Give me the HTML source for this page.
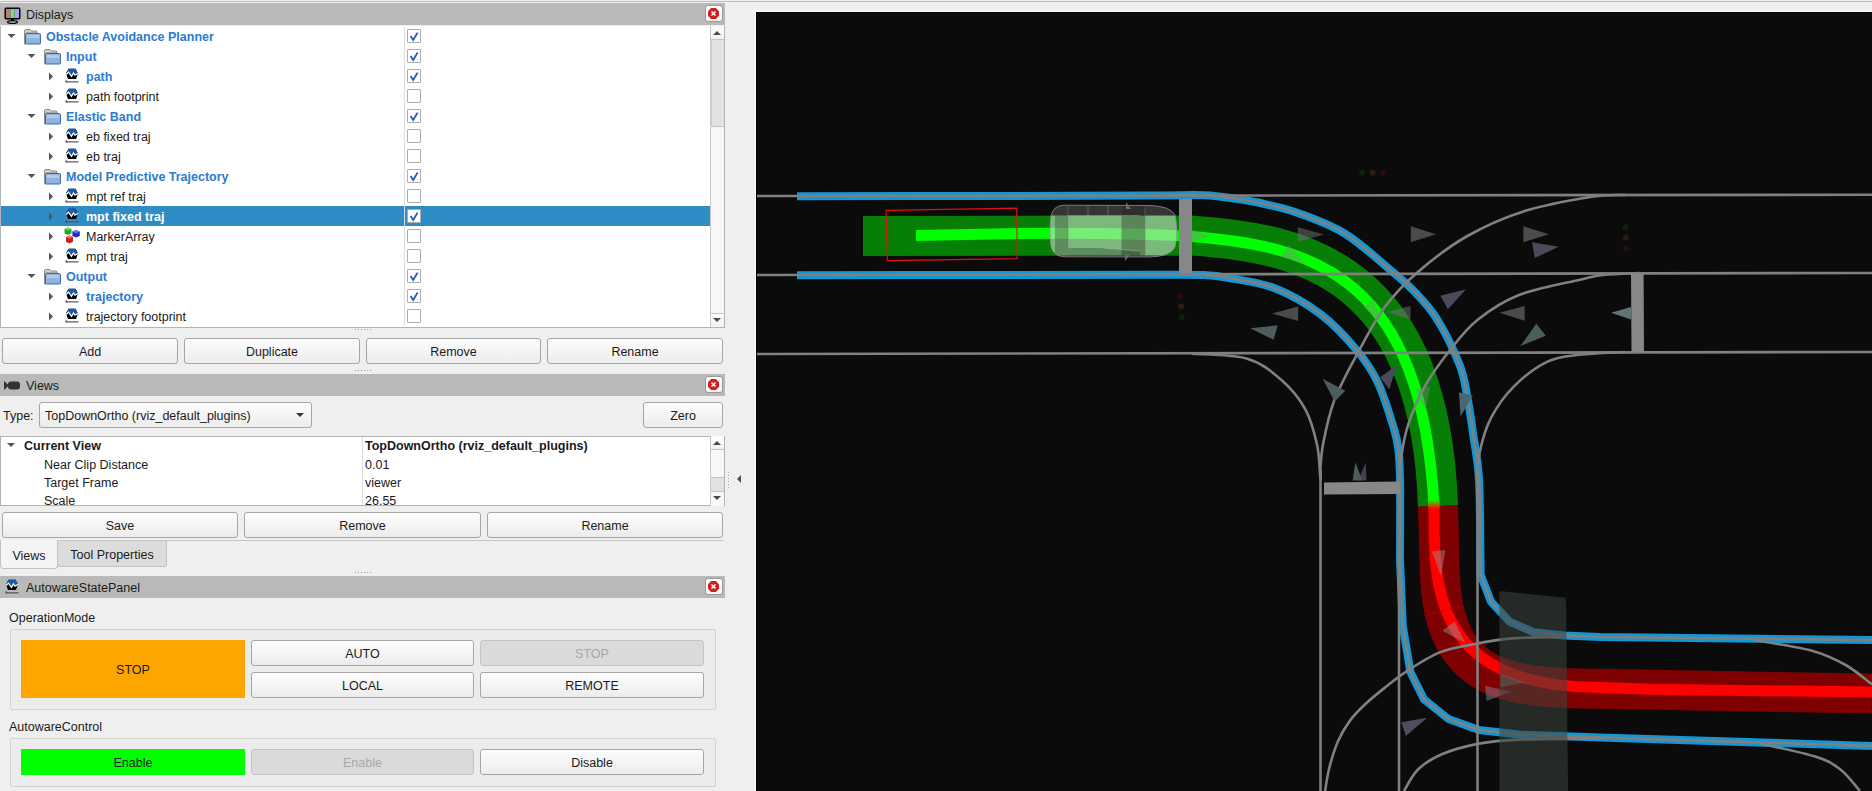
<!DOCTYPE html>
<html><head><meta charset="utf-8">
<style>
*{box-sizing:border-box;margin:0;padding:0}
html,body{width:1872px;height:791px;overflow:hidden;background:#efefef;font-family:"Liberation Sans",sans-serif;font-size:12.5px;color:#1a1a1a}
.a{position:absolute}
.topline{left:0;top:1px;width:1872px;height:1px;background:#bdbdbd}
.hdr{left:0;width:725px;height:22px;background:#b9b9b9}
.hdr .t{position:absolute;left:26px;top:1px;line-height:22px;color:#1a1a1a}
.close{position:absolute;width:18px;height:17px;background:linear-gradient(#fff,#f2f2f2);border:1px solid #9a9a9a;border-radius:3px}
.close svg{position:absolute;left:2px;top:2px}
.tree{background:#fff;border:1px solid #b3b3b3}
.row{position:absolute;left:0;height:20px;line-height:22px;white-space:nowrap}
.blue{color:#2b7bd2;font-weight:bold}
.sel{background:#308cc6}
.btn{position:absolute;height:26px;border:1px solid #a6a6a6;border-radius:3px;background:linear-gradient(#fdfdfd,#ececec);text-align:center;line-height:27px;color:#1a1a1a}
.dis{background:#dadada;border-color:#c4c4c4;color:#a8a8a8}
.cb{position:absolute;width:14px;height:14px;border:1px solid #acacac;background:#fff;border-radius:1px}
.cb svg{position:absolute;left:1px;top:1px}
.dots{position:absolute;height:1px;background-image:linear-gradient(90deg,#9a9a9a 1px,transparent 1px);background-size:3px 1px}
</style></head><body>
<div class="a topline"></div>

<!-- ============ DISPLAYS ============ -->
<div class="a hdr" style="top:3px">
  <svg class="a" style="left:4px;top:4px" width="17" height="17" viewBox="0 0 17 17">
    <rect x="0.5" y="0.5" width="16" height="12" rx="1.5" fill="#000"/>
    <rect x="2" y="2" width="4.3" height="9" fill="#c77777"/>
    <rect x="6.3" y="2" width="4.4" height="9" fill="#86d486"/>
    <rect x="10.7" y="2" width="4.3" height="9" fill="#a6a6ee"/>
    <rect x="7" y="12" width="3" height="2" fill="#000"/>
    <ellipse cx="8.5" cy="15" rx="5" ry="1.4" fill="none" stroke="#000" stroke-width="1.2"/>
  </svg>
  <div class="t">Displays</div>
  <div class="close" style="left:705px;top:2px"><svg width="11" height="11" viewBox="0 0 11 11"><polygon points="3.2,0 7.8,0 11,3.2 11,7.8 7.8,11 3.2,11 0,7.8 0,3.2" fill="#d21e1e"/><path d="M3.5 3.5 L7.5 7.5 M7.5 3.5 L3.5 7.5" stroke="#fff" stroke-width="1.6"/></svg></div>
</div>
<div class="a tree" style="left:0;top:26px;width:725px;height:302px;border-top:none"></div>
<svg class="a" style="left:7px;top:33px" width="9" height="6"><polygon points="0.5,1 8.5,1 4.5,5" fill="#555"/></svg>
<svg class="a" style="left:24px;top:29px" width="17" height="16" viewBox="0 0 17 16"><path d="M0.5 2 Q0.5 0.5 2 0.5 L6 0.5 L7.5 2 L12 2 Q13 2 13 3 L13 4 L2 4 L2 15 L0.5 15 Z" fill="#cfcfcf" stroke="#777" stroke-width="0.8"/><rect x="1.5" y="4.5" width="15" height="10.5" rx="1" fill="#8fb3dd" stroke="#3a6db0" stroke-width="1"/><rect x="3" y="6" width="12" height="3" fill="#b1cbe9"/></svg>
<div class="row blue" style="left:46px;top:26px;">Obstacle Avoidance Planner</div>
<div class="cb" style="left:407px;top:29px"><svg width="12" height="12" viewBox="0 0 12 12"><path d="M1.6 5 L4.2 9 L8.6 1.6" stroke="#1f5fa8" stroke-width="1.8" fill="none"/></svg></div>
<svg class="a" style="left:27px;top:53px" width="9" height="6"><polygon points="0.5,1 8.5,1 4.5,5" fill="#555"/></svg>
<svg class="a" style="left:44px;top:49px" width="17" height="16" viewBox="0 0 17 16"><path d="M0.5 2 Q0.5 0.5 2 0.5 L6 0.5 L7.5 2 L12 2 Q13 2 13 3 L13 4 L2 4 L2 15 L0.5 15 Z" fill="#cfcfcf" stroke="#777" stroke-width="0.8"/><rect x="1.5" y="4.5" width="15" height="10.5" rx="1" fill="#8fb3dd" stroke="#3a6db0" stroke-width="1"/><rect x="3" y="6" width="12" height="3" fill="#b1cbe9"/></svg>
<div class="row blue" style="left:66px;top:46px;">Input</div>
<div class="cb" style="left:407px;top:49px"><svg width="12" height="12" viewBox="0 0 12 12"><path d="M1.6 5 L4.2 9 L8.6 1.6" stroke="#1f5fa8" stroke-width="1.8" fill="none"/></svg></div>
<svg class="a" style="left:48px;top:72px" width="6" height="9"><polygon points="1,0.5 5,4.5 1,8.5" fill="#555"/></svg>
<svg class="a" style="left:64px;top:67px" width="16" height="17" viewBox="0 0 16 17"><polygon points="4.5,1.8 11.5,1.8 14,6.5 12,12.1 4,12.1 2,6.5" fill="#000"/><polygon points="4.5,1.8 11.5,1.8 14,6.5 11,8.3 9.5,6 7.5,9.3 4.5,5.2 2.3,7.2 2,6.5" fill="#1c59a8"/><polyline points="2.2,7.5 4.5,5.2 7.5,9.3 9.5,6 11,8.3 14.2,6.3" stroke="#fff" stroke-width="1.2" fill="none"/><rect x="1.5" y="14" width="13" height="1.6" fill="#555" opacity="0.75"/><rect x="1.8" y="13" width="0.8" height="2.6" fill="#444"/></svg>
<div class="row blue" style="left:86px;top:66px;">path</div>
<div class="cb" style="left:407px;top:69px"><svg width="12" height="12" viewBox="0 0 12 12"><path d="M1.6 5 L4.2 9 L8.6 1.6" stroke="#1f5fa8" stroke-width="1.8" fill="none"/></svg></div>
<svg class="a" style="left:48px;top:92px" width="6" height="9"><polygon points="1,0.5 5,4.5 1,8.5" fill="#555"/></svg>
<svg class="a" style="left:64px;top:87px" width="16" height="17" viewBox="0 0 16 17"><polygon points="4.5,1.8 11.5,1.8 14,6.5 12,12.1 4,12.1 2,6.5" fill="#000"/><polygon points="4.5,1.8 11.5,1.8 14,6.5 11,8.3 9.5,6 7.5,9.3 4.5,5.2 2.3,7.2 2,6.5" fill="#1c59a8"/><polyline points="2.2,7.5 4.5,5.2 7.5,9.3 9.5,6 11,8.3 14.2,6.3" stroke="#fff" stroke-width="1.2" fill="none"/><rect x="1.5" y="14" width="13" height="1.6" fill="#555" opacity="0.75"/><rect x="1.8" y="13" width="0.8" height="2.6" fill="#444"/></svg>
<div class="row" style="left:86px;top:86px;">path footprint</div>
<div class="cb" style="left:407px;top:89px"></div>
<svg class="a" style="left:27px;top:113px" width="9" height="6"><polygon points="0.5,1 8.5,1 4.5,5" fill="#555"/></svg>
<svg class="a" style="left:44px;top:109px" width="17" height="16" viewBox="0 0 17 16"><path d="M0.5 2 Q0.5 0.5 2 0.5 L6 0.5 L7.5 2 L12 2 Q13 2 13 3 L13 4 L2 4 L2 15 L0.5 15 Z" fill="#cfcfcf" stroke="#777" stroke-width="0.8"/><rect x="1.5" y="4.5" width="15" height="10.5" rx="1" fill="#8fb3dd" stroke="#3a6db0" stroke-width="1"/><rect x="3" y="6" width="12" height="3" fill="#b1cbe9"/></svg>
<div class="row blue" style="left:66px;top:106px;">Elastic Band</div>
<div class="cb" style="left:407px;top:109px"><svg width="12" height="12" viewBox="0 0 12 12"><path d="M1.6 5 L4.2 9 L8.6 1.6" stroke="#1f5fa8" stroke-width="1.8" fill="none"/></svg></div>
<svg class="a" style="left:48px;top:132px" width="6" height="9"><polygon points="1,0.5 5,4.5 1,8.5" fill="#555"/></svg>
<svg class="a" style="left:64px;top:127px" width="16" height="17" viewBox="0 0 16 17"><polygon points="4.5,1.8 11.5,1.8 14,6.5 12,12.1 4,12.1 2,6.5" fill="#000"/><polygon points="4.5,1.8 11.5,1.8 14,6.5 11,8.3 9.5,6 7.5,9.3 4.5,5.2 2.3,7.2 2,6.5" fill="#1c59a8"/><polyline points="2.2,7.5 4.5,5.2 7.5,9.3 9.5,6 11,8.3 14.2,6.3" stroke="#fff" stroke-width="1.2" fill="none"/><rect x="1.5" y="14" width="13" height="1.6" fill="#555" opacity="0.75"/><rect x="1.8" y="13" width="0.8" height="2.6" fill="#444"/></svg>
<div class="row" style="left:86px;top:126px;">eb fixed traj</div>
<div class="cb" style="left:407px;top:129px"></div>
<svg class="a" style="left:48px;top:152px" width="6" height="9"><polygon points="1,0.5 5,4.5 1,8.5" fill="#555"/></svg>
<svg class="a" style="left:64px;top:147px" width="16" height="17" viewBox="0 0 16 17"><polygon points="4.5,1.8 11.5,1.8 14,6.5 12,12.1 4,12.1 2,6.5" fill="#000"/><polygon points="4.5,1.8 11.5,1.8 14,6.5 11,8.3 9.5,6 7.5,9.3 4.5,5.2 2.3,7.2 2,6.5" fill="#1c59a8"/><polyline points="2.2,7.5 4.5,5.2 7.5,9.3 9.5,6 11,8.3 14.2,6.3" stroke="#fff" stroke-width="1.2" fill="none"/><rect x="1.5" y="14" width="13" height="1.6" fill="#555" opacity="0.75"/><rect x="1.8" y="13" width="0.8" height="2.6" fill="#444"/></svg>
<div class="row" style="left:86px;top:146px;">eb traj</div>
<div class="cb" style="left:407px;top:149px"></div>
<svg class="a" style="left:27px;top:173px" width="9" height="6"><polygon points="0.5,1 8.5,1 4.5,5" fill="#555"/></svg>
<svg class="a" style="left:44px;top:169px" width="17" height="16" viewBox="0 0 17 16"><path d="M0.5 2 Q0.5 0.5 2 0.5 L6 0.5 L7.5 2 L12 2 Q13 2 13 3 L13 4 L2 4 L2 15 L0.5 15 Z" fill="#cfcfcf" stroke="#777" stroke-width="0.8"/><rect x="1.5" y="4.5" width="15" height="10.5" rx="1" fill="#8fb3dd" stroke="#3a6db0" stroke-width="1"/><rect x="3" y="6" width="12" height="3" fill="#b1cbe9"/></svg>
<div class="row blue" style="left:66px;top:166px;">Model Predictive Trajectory</div>
<div class="cb" style="left:407px;top:169px"><svg width="12" height="12" viewBox="0 0 12 12"><path d="M1.6 5 L4.2 9 L8.6 1.6" stroke="#1f5fa8" stroke-width="1.8" fill="none"/></svg></div>
<svg class="a" style="left:48px;top:192px" width="6" height="9"><polygon points="1,0.5 5,4.5 1,8.5" fill="#555"/></svg>
<svg class="a" style="left:64px;top:187px" width="16" height="17" viewBox="0 0 16 17"><polygon points="4.5,1.8 11.5,1.8 14,6.5 12,12.1 4,12.1 2,6.5" fill="#000"/><polygon points="4.5,1.8 11.5,1.8 14,6.5 11,8.3 9.5,6 7.5,9.3 4.5,5.2 2.3,7.2 2,6.5" fill="#1c59a8"/><polyline points="2.2,7.5 4.5,5.2 7.5,9.3 9.5,6 11,8.3 14.2,6.3" stroke="#fff" stroke-width="1.2" fill="none"/><rect x="1.5" y="14" width="13" height="1.6" fill="#555" opacity="0.75"/><rect x="1.8" y="13" width="0.8" height="2.6" fill="#444"/></svg>
<div class="row" style="left:86px;top:186px;">mpt ref traj</div>
<div class="cb" style="left:407px;top:189px"></div>
<div class="a sel" style="left:1px;top:206px;width:709px;height:20px"></div>
<svg class="a" style="left:48px;top:212px" width="6" height="9"><polygon points="1,0.5 5,4.5 1,8.5" fill="#555"/></svg>
<svg class="a" style="left:64px;top:207px" width="16" height="17" viewBox="0 0 16 17"><polygon points="4.5,1.8 11.5,1.8 14,6.5 12,12.1 4,12.1 2,6.5" fill="#000"/><polygon points="4.5,1.8 11.5,1.8 14,6.5 11,8.3 9.5,6 7.5,9.3 4.5,5.2 2.3,7.2 2,6.5" fill="#1c59a8"/><polyline points="2.2,7.5 4.5,5.2 7.5,9.3 9.5,6 11,8.3 14.2,6.3" stroke="#fff" stroke-width="1.2" fill="none"/><rect x="1.5" y="14" width="13" height="1.6" fill="#555" opacity="0.75"/><rect x="1.8" y="13" width="0.8" height="2.6" fill="#444"/></svg>
<div class="row" style="left:86px;top:206px;color:#fff;font-weight:bold;">mpt fixed traj</div>
<div class="cb" style="left:407px;top:209px"><svg width="12" height="12" viewBox="0 0 12 12"><path d="M1.6 5 L4.2 9 L8.6 1.6" stroke="#1f5fa8" stroke-width="1.8" fill="none"/></svg></div>
<svg class="a" style="left:48px;top:232px" width="6" height="9"><polygon points="1,0.5 5,4.5 1,8.5" fill="#555"/></svg>
<svg class="a" style="left:63px;top:227px" width="18" height="18" viewBox="0 0 18 18"><polygon points="5,0.5 8.5,2 8.5,6.5 5,8 1.5,6.5 1.5,2" fill="#22a822"/><polygon points="5,0.5 8.5,2 5,3.5 1.5,2" fill="#70dd70"/><polygon points="13,3 16.8,4.6 16.8,9 13,10.6 9.4,9 9.4,4.6" fill="#1f2fc4"/><polygon points="13,3 16.8,4.6 13,6.2 9.4,4.6" fill="#6b7cf2"/><polygon points="6.5,8.5 10,10 10,14.8 6.5,16.5 3,14.8 3,10" fill="#cc2020"/><polygon points="6.5,8.5 10,10 6.5,11.6 3,10" fill="#f07272"/></svg>
<div class="row" style="left:86px;top:226px;">MarkerArray</div>
<div class="cb" style="left:407px;top:229px"></div>
<svg class="a" style="left:48px;top:252px" width="6" height="9"><polygon points="1,0.5 5,4.5 1,8.5" fill="#555"/></svg>
<svg class="a" style="left:64px;top:247px" width="16" height="17" viewBox="0 0 16 17"><polygon points="4.5,1.8 11.5,1.8 14,6.5 12,12.1 4,12.1 2,6.5" fill="#000"/><polygon points="4.5,1.8 11.5,1.8 14,6.5 11,8.3 9.5,6 7.5,9.3 4.5,5.2 2.3,7.2 2,6.5" fill="#1c59a8"/><polyline points="2.2,7.5 4.5,5.2 7.5,9.3 9.5,6 11,8.3 14.2,6.3" stroke="#fff" stroke-width="1.2" fill="none"/><rect x="1.5" y="14" width="13" height="1.6" fill="#555" opacity="0.75"/><rect x="1.8" y="13" width="0.8" height="2.6" fill="#444"/></svg>
<div class="row" style="left:86px;top:246px;">mpt traj</div>
<div class="cb" style="left:407px;top:249px"></div>
<svg class="a" style="left:27px;top:273px" width="9" height="6"><polygon points="0.5,1 8.5,1 4.5,5" fill="#555"/></svg>
<svg class="a" style="left:44px;top:269px" width="17" height="16" viewBox="0 0 17 16"><path d="M0.5 2 Q0.5 0.5 2 0.5 L6 0.5 L7.5 2 L12 2 Q13 2 13 3 L13 4 L2 4 L2 15 L0.5 15 Z" fill="#cfcfcf" stroke="#777" stroke-width="0.8"/><rect x="1.5" y="4.5" width="15" height="10.5" rx="1" fill="#8fb3dd" stroke="#3a6db0" stroke-width="1"/><rect x="3" y="6" width="12" height="3" fill="#b1cbe9"/></svg>
<div class="row blue" style="left:66px;top:266px;">Output</div>
<div class="cb" style="left:407px;top:269px"><svg width="12" height="12" viewBox="0 0 12 12"><path d="M1.6 5 L4.2 9 L8.6 1.6" stroke="#1f5fa8" stroke-width="1.8" fill="none"/></svg></div>
<svg class="a" style="left:48px;top:292px" width="6" height="9"><polygon points="1,0.5 5,4.5 1,8.5" fill="#555"/></svg>
<svg class="a" style="left:64px;top:287px" width="16" height="17" viewBox="0 0 16 17"><polygon points="4.5,1.8 11.5,1.8 14,6.5 12,12.1 4,12.1 2,6.5" fill="#000"/><polygon points="4.5,1.8 11.5,1.8 14,6.5 11,8.3 9.5,6 7.5,9.3 4.5,5.2 2.3,7.2 2,6.5" fill="#1c59a8"/><polyline points="2.2,7.5 4.5,5.2 7.5,9.3 9.5,6 11,8.3 14.2,6.3" stroke="#fff" stroke-width="1.2" fill="none"/><rect x="1.5" y="14" width="13" height="1.6" fill="#555" opacity="0.75"/><rect x="1.8" y="13" width="0.8" height="2.6" fill="#444"/></svg>
<div class="row blue" style="left:86px;top:286px;">trajectory</div>
<div class="cb" style="left:407px;top:289px"><svg width="12" height="12" viewBox="0 0 12 12"><path d="M1.6 5 L4.2 9 L8.6 1.6" stroke="#1f5fa8" stroke-width="1.8" fill="none"/></svg></div>
<svg class="a" style="left:48px;top:312px" width="6" height="9"><polygon points="1,0.5 5,4.5 1,8.5" fill="#555"/></svg>
<svg class="a" style="left:64px;top:307px" width="16" height="17" viewBox="0 0 16 17"><polygon points="4.5,1.8 11.5,1.8 14,6.5 12,12.1 4,12.1 2,6.5" fill="#000"/><polygon points="4.5,1.8 11.5,1.8 14,6.5 11,8.3 9.5,6 7.5,9.3 4.5,5.2 2.3,7.2 2,6.5" fill="#1c59a8"/><polyline points="2.2,7.5 4.5,5.2 7.5,9.3 9.5,6 11,8.3 14.2,6.3" stroke="#fff" stroke-width="1.2" fill="none"/><rect x="1.5" y="14" width="13" height="1.6" fill="#555" opacity="0.75"/><rect x="1.8" y="13" width="0.8" height="2.6" fill="#444"/></svg>
<div class="row" style="left:86px;top:306px;">trajectory footprint</div>
<div class="cb" style="left:407px;top:309px"></div>
<div class="a" style="left:404px;top:27px;width:1px;height:299px;background:#dcdcdc"></div>
<!-- scrollbar -->
<div class="a" style="left:710px;top:26px;width:14px;height:301px;background:#f7f7f7;border-left:1px solid #c9c9c9"></div>
<div class="a" style="left:711px;top:27px;width:13px;height:13px;background:linear-gradient(#fff,#f0f0f0);border-bottom:1px solid #c4c4c4"></div>
<svg class="a" style="left:712px;top:29px" width="10" height="8"><polygon points="1,6 5,2 9,6" fill="#4a4a4a"/></svg>
<div class="a" style="left:711px;top:40px;width:13px;height:87px;background:#e2e2e2;border-bottom:1px solid #c4c4c4;border-left:1px solid #cfcfcf"></div>
<div class="a" style="left:711px;top:313px;width:13px;height:13px;background:linear-gradient(#fff,#f0f0f0);border-top:1px solid #c4c4c4"></div>
<svg class="a" style="left:712px;top:316px" width="10" height="8"><polygon points="1,2 5,6 9,2" fill="#4a4a4a"/></svg>
<div class="dots" style="left:355px;top:329px;width:18px"></div>

<div class="btn" style="left:2px;top:338px;width:176px">Add</div>
<div class="btn" style="left:184px;top:338px;width:176px">Duplicate</div>
<div class="btn" style="left:366px;top:338px;width:175px">Remove</div>
<div class="btn" style="left:547px;top:338px;width:176px">Rename</div>
<div class="dots" style="left:355px;top:370px;width:18px"></div>

<!-- ============ VIEWS ============ -->
<div class="a hdr" style="top:374px">
  <svg class="a" style="left:4px;top:7px" width="17" height="9" viewBox="0 0 17 9">
    <polygon points="0,0 5,4.5 0,9" fill="#333"/>
    <rect x="4" y="0.5" width="12" height="8" rx="3" fill="#333"/>
  </svg>
  <div class="t">Views</div>
  <div class="close" style="left:705px;top:2px"><svg width="11" height="11" viewBox="0 0 11 11"><polygon points="3.2,0 7.8,0 11,3.2 11,7.8 7.8,11 3.2,11 0,7.8 0,3.2" fill="#d21e1e"/><path d="M3.5 3.5 L7.5 7.5 M7.5 3.5 L3.5 7.5" stroke="#fff" stroke-width="1.6"/></svg></div>
</div>
<div class="a" style="left:3px;top:406px;line-height:20px">Type:</div>
<div class="btn" style="left:39px;top:402px;width:273px;text-align:left;padding-left:5px;line-height:26px;border-radius:3px">TopDownOrtho (rviz_default_plugins)
  <svg class="a" style="left:255px;top:9px" width="10" height="6"><polygon points="1,1 9,1 5,5" fill="#333"/></svg></div>
<div class="btn" style="left:643px;top:402px;width:80px">Zero</div>

<div class="a tree" style="left:0;top:436px;width:725px;height:70px"></div>
<div class="a" style="left:362px;top:437px;width:1px;height:68px;background:#dcdcdc"></div>
<svg class="a" style="left:6px;top:442px" width="10" height="8"><polygon points="1,1 9,1 5,5" fill="#555"/></svg>
<div class="row" style="left:24px;top:436px;height:18px;line-height:21px;font-weight:bold">Current View</div>
<div class="row" style="left:44px;top:455px;height:18px;line-height:21px">Near Clip Distance</div>
<div class="row" style="left:44px;top:473px;height:18px;line-height:21px">Target Frame</div>
<div class="row" style="left:44px;top:491px;height:18px;line-height:21px">Scale</div>
<div class="row" style="left:365px;top:436px;height:18px;line-height:21px;font-weight:bold">TopDownOrtho (rviz_default_plugins)</div>
<div class="row" style="left:365px;top:455px;height:18px;line-height:21px">0.01</div>
<div class="row" style="left:365px;top:473px;height:18px;line-height:21px">viewer</div>
<div class="row" style="left:365px;top:491px;height:18px;line-height:21px">26.55</div>
<!-- views scrollbar -->
<div class="a" style="left:710px;top:436px;width:14px;height:70px;background:#f7f7f7;border-left:1px solid #c9c9c9"></div>
<div class="a" style="left:711px;top:437px;width:13px;height:13px;background:linear-gradient(#fff,#f0f0f0);border-bottom:1px solid #c4c4c4"></div>
<svg class="a" style="left:712px;top:439px" width="10" height="8"><polygon points="1,6 5,2 9,6" fill="#4a4a4a"/></svg>
<div class="a" style="left:711px;top:477px;width:13px;height:15px;background:#e2e2e2;border-top:1px solid #c4c4c4;border-bottom:1px solid #c4c4c4"></div>
<svg class="a" style="left:712px;top:494px" width="10" height="8"><polygon points="1,2 5,6 9,2" fill="#4a4a4a"/></svg>

<div class="btn" style="left:2px;top:512px;width:236px">Save</div>
<div class="btn" style="left:244px;top:512px;width:237px">Remove</div>
<div class="btn" style="left:487px;top:512px;width:236px">Rename</div>

<!-- tabs -->
<div class="a" style="left:57px;top:540px;width:667px;height:1px;background:#c6c6c6"></div>
<div class="a" style="left:57px;top:541px;width:110px;height:26px;background:#dcdcdc;border:1px solid #c2c2c2;border-top:none;border-radius:0 0 3px 3px;text-align:center;line-height:28px">Tool Properties</div>
<div class="a" style="left:0;top:540px;width:58px;height:29px;background:#f4f4f4;border:1px solid #c2c2c2;border-top:none;border-radius:0 0 4px 4px;text-align:center;line-height:32px">Views</div>
<div class="dots" style="left:355px;top:572px;width:18px"></div>

<!-- ============ AUTOWARE STATE PANEL ============ -->
<div class="a hdr" style="top:576px">
  <svg class="a" style="left:4px;top:2px" width="16" height="17" viewBox="0 0 16 17"><polygon points="4.5,1.8 11.5,1.8 14,6.5 12,12.1 4,12.1 2,6.5" fill="#000"/><polygon points="4.5,1.8 11.5,1.8 14,6.5 11,8.3 9.5,6 7.5,9.3 4.5,5.2 2.3,7.2 2,6.5" fill="#1c59a8"/><polyline points="2.2,7.5 4.5,5.2 7.5,9.3 9.5,6 11,8.3 14.2,6.3" stroke="#fff" stroke-width="1.2" fill="none"/><rect x="1.5" y="14" width="13" height="1.6" fill="#555" opacity="0.75"/><rect x="1.8" y="13" width="0.8" height="2.6" fill="#444"/></svg>
  <div class="t">AutowareStatePanel</div>
  <div class="close" style="left:705px;top:2px"><svg width="11" height="11" viewBox="0 0 11 11"><polygon points="3.2,0 7.8,0 11,3.2 11,7.8 7.8,11 3.2,11 0,7.8 0,3.2" fill="#d21e1e"/><path d="M3.5 3.5 L7.5 7.5 M7.5 3.5 L3.5 7.5" stroke="#fff" stroke-width="1.6"/></svg></div>
</div>
<div class="a" style="left:9px;top:608px;line-height:20px">OperationMode</div>
<div class="a" style="left:10px;top:629px;width:706px;height:81px;border:1px solid #d2d2d2;border-radius:2px;background:#ececec"></div>
<div class="a" style="left:21px;top:640px;width:224px;height:58px;background:#ffa500;text-align:center;line-height:60px">STOP</div>
<div class="btn" style="left:251px;top:640px;width:223px;height:26px">AUTO</div>
<div class="btn dis" style="left:480px;top:640px;width:224px;height:26px">STOP</div>
<div class="btn" style="left:251px;top:672px;width:223px;height:26px">LOCAL</div>
<div class="btn" style="left:480px;top:672px;width:224px;height:26px">REMOTE</div>

<div class="a" style="left:9px;top:717px;line-height:20px">AutowareControl</div>
<div class="a" style="left:10px;top:738px;width:706px;height:49px;border:1px solid #d2d2d2;border-radius:2px;background:#ececec"></div>
<div class="a" style="left:21px;top:749px;width:224px;height:26px;background:#00ff00;text-align:center;line-height:28px">Enable</div>
<div class="btn dis" style="left:251px;top:749px;width:223px;height:26px">Enable</div>
<div class="btn" style="left:480px;top:749px;width:224px;height:26px">Disable</div>

<!-- splitter -->
<div class="a" style="left:728px;top:472px;width:1px;height:17px;background-image:linear-gradient(#a8a8a8 1px,transparent 1px);background-size:1px 3px"></div>
<svg class="a" style="left:735px;top:474px" width="8" height="10"><polygon points="2,5 6,1 6,9" fill="#4f4f4f"/></svg>

<!-- ============ 3D VIEW ============ -->
<div class="a" style="left:755px;top:11px;width:1117px;height:780px;background:#fff"></div>
<div class="a" style="left:756px;top:12px;width:1116px;height:779px;background:#000"></div>
<svg id="v3d" class="a" style="left:757px;top:13px" width="1115" height="778" viewBox="757 13 1115 778">
<rect x="757" y="13" width="1115" height="778" fill="#0b0b0b"/>
<path d="M863,236 L1192,235.6 C1301.4,242.8 1430.3,270.1 1438,506" stroke="#077f07" stroke-width="40" fill="none"/>
<path d="M1438,506 L1439.5,560 C1439.5,678 1497,688.7 1600,688.7 L1872,693.6" stroke="#7f0000" stroke-width="40" fill="none"/>

<path d="M916,235.4 L1020,233.5 Q1120,232.5 1192,236.4 C1315.6,246.3 1421.8,277.2 1434,506" stroke="#00ff00" stroke-width="11" fill="none"/>
<path d="M1434,506 C1434,582 1430,687.5 1600,687.5 L1650,689.3 L1872,692" stroke="#ff0000" stroke-width="11" fill="none"/>
<defs><linearGradient id="g2r" x1="0" y1="0" x2="0" y2="1"><stop offset="0" stop-color="#00ff00"/><stop offset="0.5" stop-color="#a07000"/><stop offset="1" stop-color="#ff0000"/></linearGradient></defs>
<rect x="1428.5" y="500" width="11" height="9" fill="url(#g2r)"/>
<path d="M1424,615.5 L1462,606.4" stroke="#c00000" stroke-width="1" opacity="0.7"/>
<path d="M797.0,196.2 C830.8,196.2 941.2,196.1 1000.0,196.0 C1058.8,195.9 1116.0,195.6 1150.0,195.5 C1184.0,195.4 1189.7,194.6 1204.0,195.2 C1218.3,195.8 1225.7,197.3 1236.0,198.8 C1246.3,200.3 1255.3,201.8 1266.0,204.3 C1276.7,206.8 1286.8,208.8 1300.0,213.7 C1313.2,218.6 1330.3,224.5 1345.5,234.0 C1360.7,243.5 1379.6,261.0 1391.0,270.5 C1402.4,280.0 1406.2,283.0 1413.8,291.0 C1421.4,299.0 1428.9,306.2 1436.5,318.3 C1444.1,330.4 1454.2,351.1 1459.3,363.9 C1464.4,376.7 1464.6,382.8 1467.0,395.0 C1469.4,407.2 1471.6,423.4 1473.6,437.4 C1475.6,451.4 1477.8,458.6 1479.0,479.0 C1480.2,499.4 1480.2,546.5 1480.5,560.0 L1480.5,574.4 L1491.0,601.8 L1509.5,621.6 L1534.0,632.3 L1564.0,635.4 L1600.0,637.0 L1872.0,640.0" stroke="#1196d6" stroke-width="8" fill="none" stroke-linejoin="round"/>
<path d="M797.0,275.2 C830.8,275.2 941.2,275.1 1000.0,275.0 C1058.8,274.9 1116.0,274.8 1150.0,274.8 C1184.0,274.8 1190.7,274.4 1204.0,275.0 C1217.3,275.6 1218.1,275.9 1230.0,278.2 C1241.9,280.4 1260.3,282.4 1275.5,288.5 C1290.7,294.6 1307.3,304.1 1321.0,314.5 C1334.7,324.9 1347.9,339.6 1357.4,351.0 C1366.9,362.4 1371.9,370.1 1378.0,383.0 C1384.1,395.9 1390.5,417.3 1393.9,428.5 C1397.3,439.7 1397.4,441.6 1398.4,450.0 C1399.4,458.4 1399.7,460.7 1400.0,479.0 C1400.3,497.3 1400.0,546.5 1400.0,560.0 L1402.8,626.0 L1410.4,672.0 L1424.0,699.4 L1448.5,719.0 L1479.0,730.0 L1518.7,734.5 L1600.0,737.5 L1872.0,746.0" stroke="#1196d6" stroke-width="8" fill="none" stroke-linejoin="round"/>
<path d="M756.0,196.0 L1872.0,194.8" stroke="#808080" stroke-width="2.6" fill="none" stroke-linejoin="round"/>
<path d="M756.0,275.0 L1872.0,273.0" stroke="#808080" stroke-width="2.6" fill="none" stroke-linejoin="round"/>
<path d="M756.0,354.0 L1872.0,352.0" stroke="#808080" stroke-width="2.6" fill="none" stroke-linejoin="round"/>
<path d="M1150.0,195.5 C1159.0,195.4 1189.7,194.6 1204.0,195.2 C1218.3,195.8 1225.7,197.3 1236.0,198.8 C1246.3,200.3 1255.3,201.8 1266.0,204.3 C1276.7,206.8 1286.8,208.8 1300.0,213.7 C1313.2,218.6 1330.3,224.5 1345.5,234.0 C1360.7,243.5 1379.6,261.0 1391.0,270.5 C1402.4,280.0 1406.2,283.0 1413.8,291.0 C1421.4,299.0 1428.9,306.2 1436.5,318.3 C1444.1,330.4 1454.2,351.1 1459.3,363.9 C1464.4,376.7 1464.6,382.8 1467.0,395.0 C1469.4,407.2 1471.6,423.4 1473.6,437.4 C1475.6,451.4 1477.8,458.6 1479.0,479.0 C1480.2,499.4 1480.2,546.5 1480.5,560.0 L1480.5,574.4 L1491.0,601.8 L1509.5,621.6 L1534.0,632.3 L1564.0,635.4 L1600.0,637.0 L1872.0,640.0" stroke="#808080" stroke-width="2.6" fill="none" stroke-linejoin="round"/>
<path d="M1754.0,640.0 C1763.7,641.8 1796.7,646.5 1812.0,650.7 C1827.3,654.9 1835.7,659.4 1845.7,665.0 C1855.7,670.6 1867.6,681.2 1872.0,684.5" stroke="#808080" stroke-width="2.6" fill="none" stroke-linejoin="round"/>
<path d="M1150.0,274.8 C1159.0,274.8 1190.7,274.4 1204.0,275.0 C1217.3,275.6 1218.1,275.9 1230.0,278.2 C1241.9,280.4 1260.3,282.4 1275.5,288.5 C1290.7,294.6 1307.3,304.1 1321.0,314.5 C1334.7,324.9 1347.9,339.6 1357.4,351.0 C1366.9,362.4 1371.9,370.1 1378.0,383.0 C1384.1,395.9 1390.5,417.3 1393.9,428.5 C1397.3,439.7 1397.4,441.6 1398.4,450.0 C1399.4,458.4 1399.7,460.7 1400.0,479.0 C1400.3,497.3 1400.0,546.5 1400.0,560.0 L1402.8,626.0 L1410.4,672.0 L1424.0,699.4 L1448.5,719.0 L1479.0,730.0 L1518.7,734.5 L1600.0,737.5 L1872.0,746.0" stroke="#808080" stroke-width="2.6" fill="none" stroke-linejoin="round"/>
<path d="M1761.0,743.7 C1770.3,745.9 1803.4,752.6 1816.7,757.0 C1830.0,761.4 1833.8,764.3 1841.0,770.0 C1848.2,775.7 1856.8,787.5 1860.0,791.0" stroke="#808080" stroke-width="2.6" fill="none" stroke-linejoin="round"/>
<path d="M1320.5,470.0 L1320.5,791.0" stroke="#808080" stroke-width="2.6" fill="none" stroke-linejoin="round"/>
<path d="M1399.0,470.0 L1399.0,791.0" stroke="#808080" stroke-width="2.6" fill="none" stroke-linejoin="round"/>
<path d="M1477.5,470.0 L1477.5,791.0" stroke="#808080" stroke-width="2.6" fill="none" stroke-linejoin="round"/>
<path d="M1192.0,353.8 C1201.2,354.6 1232.3,354.2 1247.3,358.7 C1262.3,363.1 1272.3,372.0 1282.0,380.5 C1291.7,389.0 1299.7,398.9 1305.5,409.6 C1311.3,420.3 1314.6,433.8 1317.0,444.5 C1319.4,455.2 1319.4,467.7 1320.0,473.6 C1320.6,479.5 1320.4,478.9 1320.5,480.0" stroke="#808080" stroke-width="2.6" fill="none" stroke-linejoin="round"/>
<path d="M1625.0,195.0 C1619.5,195.3 1608.6,194.0 1591.7,196.7 C1574.8,199.4 1544.3,204.8 1523.4,211.4 C1502.5,218.0 1484.2,226.3 1466.5,236.5 C1448.8,246.7 1430.9,260.7 1417.3,272.4 C1403.7,284.1 1394.8,293.6 1385.0,306.7 C1375.2,319.8 1367.1,335.6 1358.7,351.2 C1350.3,366.8 1340.4,384.4 1334.4,400.0 C1328.5,415.6 1325.3,432.5 1323.0,444.5 C1320.7,456.5 1320.7,466.1 1320.3,472.0 C1319.9,477.9 1320.5,478.7 1320.5,480.0" stroke="#808080" stroke-width="2.6" fill="none" stroke-linejoin="round"/>
<path d="M1640.0,273.0 C1633.8,273.3 1613.0,273.9 1603.0,275.0 C1593.0,276.1 1594.0,276.4 1580.0,279.7 C1566.0,283.0 1536.1,288.3 1519.0,295.0 C1501.9,301.7 1489.0,310.7 1477.4,320.0 C1465.8,329.3 1458.3,339.6 1449.5,350.7 C1440.7,361.8 1431.5,374.3 1424.5,386.8 C1417.5,399.3 1411.7,413.8 1407.8,425.8 C1403.9,437.8 1402.3,450.0 1400.9,459.0 C1399.5,468.0 1399.7,476.5 1399.5,480.0" stroke="#808080" stroke-width="2.6" fill="none" stroke-linejoin="round"/>
<path d="M1625.0,352.0 C1617.5,352.5 1593.0,353.2 1580.0,354.8 C1567.0,356.4 1558.1,356.5 1547.0,361.8 C1535.9,367.1 1522.8,377.5 1513.5,386.8 C1504.2,396.1 1496.9,406.7 1491.3,417.4 C1485.7,428.1 1482.3,440.4 1480.0,450.8 C1477.7,461.2 1477.9,475.1 1477.5,480.0" stroke="#808080" stroke-width="2.6" fill="none" stroke-linejoin="round"/>
<path d="M1325.1,791.0 C1325.8,787.0 1327.3,775.3 1329.5,767.0 C1331.7,758.7 1334.7,748.7 1338.1,741.0 C1341.5,733.3 1345.3,726.9 1350.0,720.6 C1354.7,714.3 1360.2,708.9 1366.2,703.3 C1372.2,697.7 1378.9,692.4 1385.7,687.0 C1392.5,681.6 1398.3,676.6 1407.3,670.8 C1416.3,665.0 1429.2,656.7 1439.7,652.4 C1450.2,648.1 1457.8,647.2 1470.0,644.9 C1482.2,642.6 1496.9,639.7 1512.6,638.4 C1528.3,637.1 1555.4,637.2 1564.0,637.0" stroke="#808080" stroke-width="2.6" fill="none" stroke-linejoin="round"/>
<path d="M1404.0,791.0 C1406.3,787.4 1411.6,775.7 1418.0,769.5 C1424.4,763.3 1432.2,758.3 1442.4,754.0 C1452.6,749.7 1466.3,746.0 1479.0,743.6 C1491.7,741.2 1498.5,740.5 1518.7,739.6 C1538.9,738.8 1586.5,738.7 1600.0,738.5" stroke="#808080" stroke-width="2.6" fill="none" stroke-linejoin="round"/>
<rect x="1179" y="199" width="13" height="74" fill="#878787"/>
<polygon points="1631,273 1643.6,273 1644,352 1631.5,352" fill="#878787"/>
<polygon points="1324,482.5 1400,481.5 1400,494 1324,494.5" fill="#878787"/>
<defs><clipPath id="carclip"><path d="M1064,205.2 L1150,205.5 Q1170,206 1175,215 Q1178.5,231 1175,247 Q1170,256.5 1150,257 L1064,256.8 Q1053,256 1051,246 Q1049,231 1051,216 Q1053,205.5 1064,205.2 Z"/></clipPath></defs>
<g clip-path="url(#carclip)">
<rect x="1048" y="203" width="132" height="13" fill="rgba(58,58,58,0.92)"/>
<rect x="1048" y="255.5" width="132" height="4" fill="rgba(58,58,58,0.92)"/>
<rect x="1048" y="215.5" width="132" height="40" fill="rgba(201,222,201,0.6)"/>
<rect x="1121.5" y="215.5" width="23.5" height="40" fill="rgba(20,30,20,0.33)"/>
<rect x="1055" y="215.5" width="13" height="40" fill="rgba(20,30,20,0.28)"/>
<rect x="1121.5" y="203" width="24" height="13" fill="rgba(30,30,30,0.3)"/>
<path d="M1068,215.5 L1140,215.5 M1088,206 L1088,215 M1108,206 L1108,215" stroke="rgba(150,150,150,0.5)" stroke-width="1" fill="none"/>
<path d="M1068,248 L1103,248 L1140,251 L1140,257 L1068,257 Z" fill="rgba(30,40,30,0.3)"/>
<path d="M1103,248 L1140,251" stroke="rgba(200,200,200,0.4)" stroke-width="1" fill="none"/>
</g>
<path d="M1064,205.2 L1150,205.5 Q1170,206 1175,215 Q1178.5,231 1175,247 Q1170,256.5 1150,257 L1064,256.8 Q1053,256 1051,246 Q1049,231 1051,216 Q1053,205.5 1064,205.2 Z" fill="none" stroke="rgba(150,150,150,0.75)" stroke-width="1"/>
<path d="M1068,206 L1068,256 M1145,207 L1145,256" stroke="rgba(120,120,120,0.5)" stroke-width="1"/>
<polygon points="1126,202 1131,209 1126,209" fill="#6a6a6a"/><polygon points="1125,261 1130,255 1125,255" fill="#6a6a6a"/>
<polygon points="886,210.3 1016.7,208.2 1017.2,258.6 887.4,260.7" fill="none" stroke="#e01010" stroke-width="1.2"/>
<polygon points="1410.8,226.2 1435.8,234.2 1410.8,242.2" fill="#4b4b4b"/>
<polygon points="1523.4,226.2 1549.0,234.2 1523.4,242.2" fill="#4b4b4b"/>
<polygon points="1532.0,242.2 1558.7,246.7 1534.8,258.1" fill="#4a4a5a"/>
<polygon points="1440.4,295.7 1466.0,289.3 1447.9,309.3" fill="#4a4a5a"/>
<polygon points="1499.5,312.7 1524.6,305.9 1524.6,320.7" fill="#4b4b4b"/>
<polygon points="1611.0,312.7 1631.0,307.0 1631.0,319.5" fill="#617272"/>
<polygon points="1520.5,346.0 1536.3,323.8 1545.8,335.8" fill="#4d5c5c"/>
<polygon points="1272.0,313.6 1298.2,306.4 1298.2,321.0" fill="#4b4b4b"/>
<polygon points="1250.2,328.2 1277.8,325.3 1273.5,339.8" fill="#4d5c5c"/>
<polygon points="1322.6,378.7 1345.3,390.8 1334.7,401.4" fill="#4d5c5c"/>
<polygon points="1380.2,377.2 1396.9,365.0 1389.3,389.3" fill="#4a4a5a"/>
<polygon points="1459.0,392.3 1472.7,395.4 1460.6,416.6" fill="#4d6570"/>
<polygon points="1352.6,480.5 1355.4,462.4 1362.3,480.5" fill="#4d5c5c"/>
<polygon points="1358.2,480.5 1365.7,462.4 1366.5,480.5" fill="rgba(80,80,100,0.8)"/>
<polygon points="1401.3,722.3 1427.2,717.7 1405.9,736.0" fill="#4d4d5d"/>
<polygon points="1297.7,227.3 1324.2,234.6 1297.7,241.7" fill="rgba(110,110,110,0.55)"/>
<polygon points="1386.2,312.0 1410.5,305.9 1410.5,319.5" fill="rgba(110,110,110,0.55)"/>
<polygon points="1281.0,256.9 1288.6,244.7 1306.8,264.5" fill="rgba(130,130,130,0.4)"/>
<polygon points="1363.5,307.4 1372.6,299.8 1381.7,322.6" fill="rgba(130,130,130,0.4)"/>
<polygon points="1415.0,389.3 1430.2,386.2 1425.7,410.5" fill="rgba(130,130,130,0.4)"/>
<polygon points="1192.0,229.5 1210.0,236.0 1192.0,241.0" fill="rgba(130,130,130,0.45)"/>
<polygon points="1431.8,551.5 1445.5,550.0 1441.0,576.0" fill="rgba(150,150,150,0.45)"/>
<polygon points="1442.4,630.8 1454.6,621.6 1465.3,643.0" fill="rgba(150,150,150,0.45)"/>
<polygon points="1500.4,673.5 1524.8,682.6 1500.4,687.2" fill="rgba(150,150,150,0.45)"/>
<polygon points="1485.0,685.7 1511.0,691.8 1486.6,701.0" fill="rgba(140,140,170,0.45)"/>
<polygon points="1499.4,591 1566,597.8 1568,791 1499.5,791" fill="rgba(60,67,63,0.56)"/>
<circle cx="1362" cy="172.8" r="3" fill="#0d220d"/>
<circle cx="1372.6" cy="172.8" r="3" fill="#24200c"/>
<circle cx="1383" cy="172.8" r="3" fill="#240d0d"/>
<circle cx="1625.4" cy="227.4" r="3" fill="#0d220d"/>
<circle cx="1625.9" cy="237.6" r="3" fill="#24200c"/>
<circle cx="1626.4" cy="248.3" r="3" fill="#240d0d"/>
<circle cx="1180.5" cy="296" r="3" fill="#240d0d"/>
<circle cx="1181" cy="306.4" r="3" fill="#24200c"/>
<circle cx="1181.7" cy="316.9" r="3" fill="#0d220d"/>
</svg>

</body></html>
